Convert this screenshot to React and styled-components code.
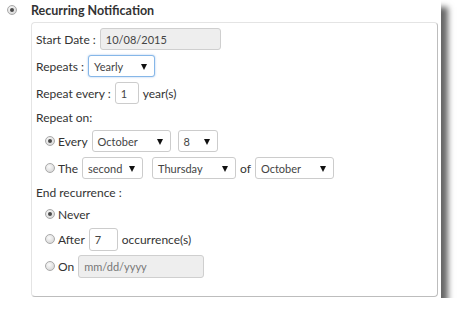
import React from "react";
import styled, { createGlobalStyle } from "styled-components";

const GlobalStyle = createGlobalStyle`
  body {
    margin: 0;
    background: #ffffff;
    font-family: Lato, "Open Sans", sans-serif;
    color: #333;
  }
`;

const Frame = styled.div`
  width: 441px;
  height: 298px;
  background: #fff;
  box-shadow: 7px 7px 6px rgba(0, 0, 0, 0.6);
  box-sizing: border-box;
  padding: 3px 0 0 7px;
`;

const Header = styled.div`
  display: flex;
  align-items: center;
  gap: 14px;
  height: 14px;
  font-size: 12.5px;
  font-weight: bold;
  color: #333;
`;

const Panel = styled.div`
  margin: 5px 0 0 24px;
  width: 407px;
  height: 275px;
  box-sizing: border-box;
  border: 1px solid #e4e4e4;
  border-right-color: #bdbdbd;
  border-bottom-color: #bdbdbd;
  border-radius: 4px;
  padding: 5px 4px 0;
  display: flex;
  flex-direction: column;
  gap: 5px;
`;

const Row = styled.div`
  display: flex;
  align-items: center;
  gap: 4px;
  height: ${(p) => p.h || 22}px;
  padding-left: ${(p) => (p.indent ? 9 : 0)}px;
  font-size: 12px;
  color: #333;
  white-space: nowrap;
`;

const Label = styled.span`
  margin-right: ${(p) => p.mr || 0}px;
`;

const Input = styled.div`
  box-sizing: border-box;
  width: ${(p) => p.w}px;
  height: ${(p) => p.h || 22}px;
  border: 1px solid ${(p) => (p.disabled ? "#cfcfcf" : "#cccccc")};
  border-radius: 3px;
  background: ${(p) => (p.disabled ? "#eeeeee" : "#ffffff")};
  display: flex;
  align-items: center;
  padding-left: 5px;
  font-size: 11px;
  color: ${(p) => (p.placeholder ? "#777" : "#444")};
`;

const Select = styled.div`
  box-sizing: border-box;
  width: ${(p) => p.w}px;
  height: 22px;
  margin-left: ${(p) => p.ml || 0}px;
  border: 1px solid ${(p) => (p.focus ? "#86b7e8" : "#cccccc")};
  box-shadow: ${(p) => (p.focus ? "0 0 2px rgba(90,150,220,0.6)" : "none")};
  border-radius: 3px;
  background: #fff;
  display: flex;
  align-items: center;
  justify-content: space-between;
  padding: 1px 7px 0 5px;
  font-size: 11px;
  color: #444;
`;

const Arrow = styled.span`
  width: 0;
  height: 0;
  border-left: 3.5px solid transparent;
  border-right: 3.5px solid transparent;
  border-top: 6px solid #111;
`;

const Radio = styled.span`
  box-sizing: border-box;
  width: 10px;
  height: 10px;
  border-radius: 50%;
  border: 1px solid #a9a9a9;
  background: radial-gradient(circle at 40% 35%, #fafafa 0%, #dcdcdc 70%, #c8c8c8 100%);
  display: inline-flex;
  align-items: center;
  justify-content: center;
  flex-shrink: 0;
  margin-right: ${(p) => (p.tight ? -1 : 0)}px;
  &::after {
    content: "";
    width: 4px;
    height: 4px;
    border-radius: 50%;
    background: ${(p) => (p.checked ? "#4a4a4a" : "transparent")};
  }
`;

function Dropdown({ w, value, focus, ml }) {
  return (
    <Select w={w} focus={focus} ml={ml}>
      <span>{value}</span>
      <Arrow />
    </Select>
  );
}

export default function App() {
  return (
    <>
      <GlobalStyle />
      <Frame>
        <Header>
          <Radio checked />
          <span>Recurring Notification</span>
        </Header>
        <Panel>
          <Row>
            <Label>Start Date :</Label>
            <Input w={121} disabled>10/08/2015</Input>
          </Row>
          <Row>
            <Label>Repeats :</Label>
            <Dropdown w={67} value="Yearly" focus />
          </Row>
          <Row>
            <Label>Repeat every :</Label>
            <Input w={24}>1</Input>
            <Label>year(s)</Label>
          </Row>
          <Row h={16}>
            <Label>Repeat on:</Label>
          </Row>
          <Row indent>
            <Radio checked tight />
            <Label>Every</Label>
            <Dropdown w={79} value="October" />
            <Dropdown w={40} value="8" ml={3} />
          </Row>
          <Row indent>
            <Radio tight />
            <Label>The</Label>
            <Dropdown w={61} value="second" />
            <Dropdown w={84} value="Thursday" ml={5} />
            <Label>of</Label>
            <Dropdown w={79} value="October" />
          </Row>
          <Row h={16}>
            <Label>End recurrence :</Label>
          </Row>
          <Row indent h={18}>
            <Radio checked tight />
            <Label>Never</Label>
          </Row>
          <Row indent>
            <Radio tight />
            <Label>After</Label>
            <Input w={29} h={23}>7</Input>
            <Label>occurrence(s)</Label>
          </Row>
          <Row indent>
            <Radio tight />
            <Label>On</Label>
            <Input w={126} h={23} disabled placeholder>
              mm/dd/yyyy
            </Input>
          </Row>
        </Panel>
      </Frame>
    </>
  );
}
